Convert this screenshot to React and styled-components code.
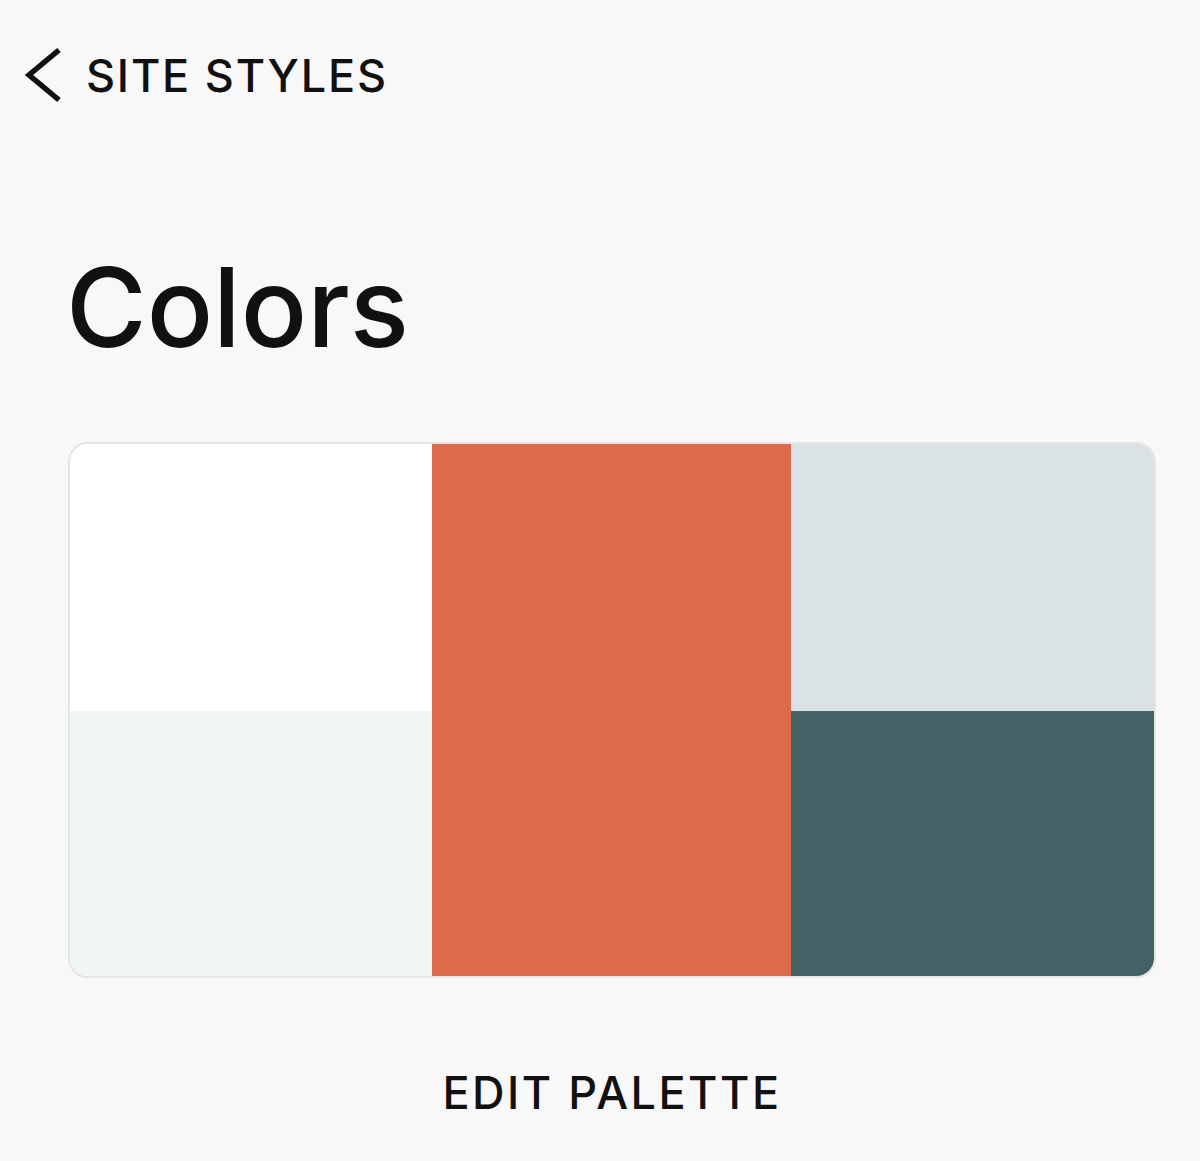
import styled, { createGlobalStyle } from 'styled-components';

const GlobalStyle = createGlobalStyle`
  html, body {
    margin: 0;
    padding: 0;
    background: #f8f8f8;
  }
  body {
    font-family: Inter, "Liberation Sans", sans-serif;
    color: #111;
  }
`;

const Page = styled.div`
  width: 1200px;
  height: 1161px;
  box-sizing: border-box;
  display: flex;
  flex-direction: column;
  background: #f8f8f8;
`;

const TopBar = styled.div`
  display: flex;
  align-items: center;
  gap: 22px;
  padding: 48px 0 0 22px;
  height: 54px;
`;

const BackLabel = styled.span`
  font-size: 45px;
  font-weight: 500;
  letter-spacing: 1.8px;
  line-height: 1;
  color: #111;
`;

const Content = styled.div`
  padding: 0 44px 0 68px;
  display: flex;
  flex-direction: column;
`;

const Title = styled.h1`
  margin: 150px 0 0 -2px;
  font-size: 110px;
  font-weight: 500;
  line-height: 1;
  letter-spacing: 0;
  color: #111;
`;

const Palette = styled.div`
  margin-top: 80px;
  display: grid;
  grid-template-columns: 362px 359px 1fr;
  grid-template-rows: 267px 265px;
  border: 2px solid #e5e5e5;
  border-radius: 20px;
  overflow: hidden;
`;

const Swatch = styled.div`
  background: ${p => p.color};
  grid-row: ${p => (p.tall ? '1 / span 2' : 'auto')};
`;

const EditButton = styled.button`
  margin: 92px auto 0;
  background: none;
  border: none;
  padding: 0;
  font-family: Inter, "Liberation Sans", sans-serif;
  font-size: 45px;
  font-weight: 500;
  letter-spacing: 2.5px;
  line-height: 1;
  color: #111;
`;

function Chevron() {
  return (
    <svg width="42" height="56" viewBox="0 0 42 56">
      <path d="M37 3 L7 28 L37 53" fill="none" stroke="#111" strokeWidth="5.5" />
    </svg>
  );
}

export default function App() {
  return (
    <Page>
      <GlobalStyle />
      <TopBar>
        <Chevron />
        <BackLabel>SITE STYLES</BackLabel>
      </TopBar>
      <Content>
        <Title>Colors</Title>
        <Palette>
          <Swatch color="#ffffff" />
          <Swatch color="#dc6a4b" tall style={{ gridColumn: 2 }} />
          <Swatch color="#dae2e5" />
          <Swatch color="#f0f5f5" />
          <Swatch color="#446165" />
        </Palette>
        <EditButton>EDIT PALETTE</EditButton>
      </Content>
    </Page>
  );
}
